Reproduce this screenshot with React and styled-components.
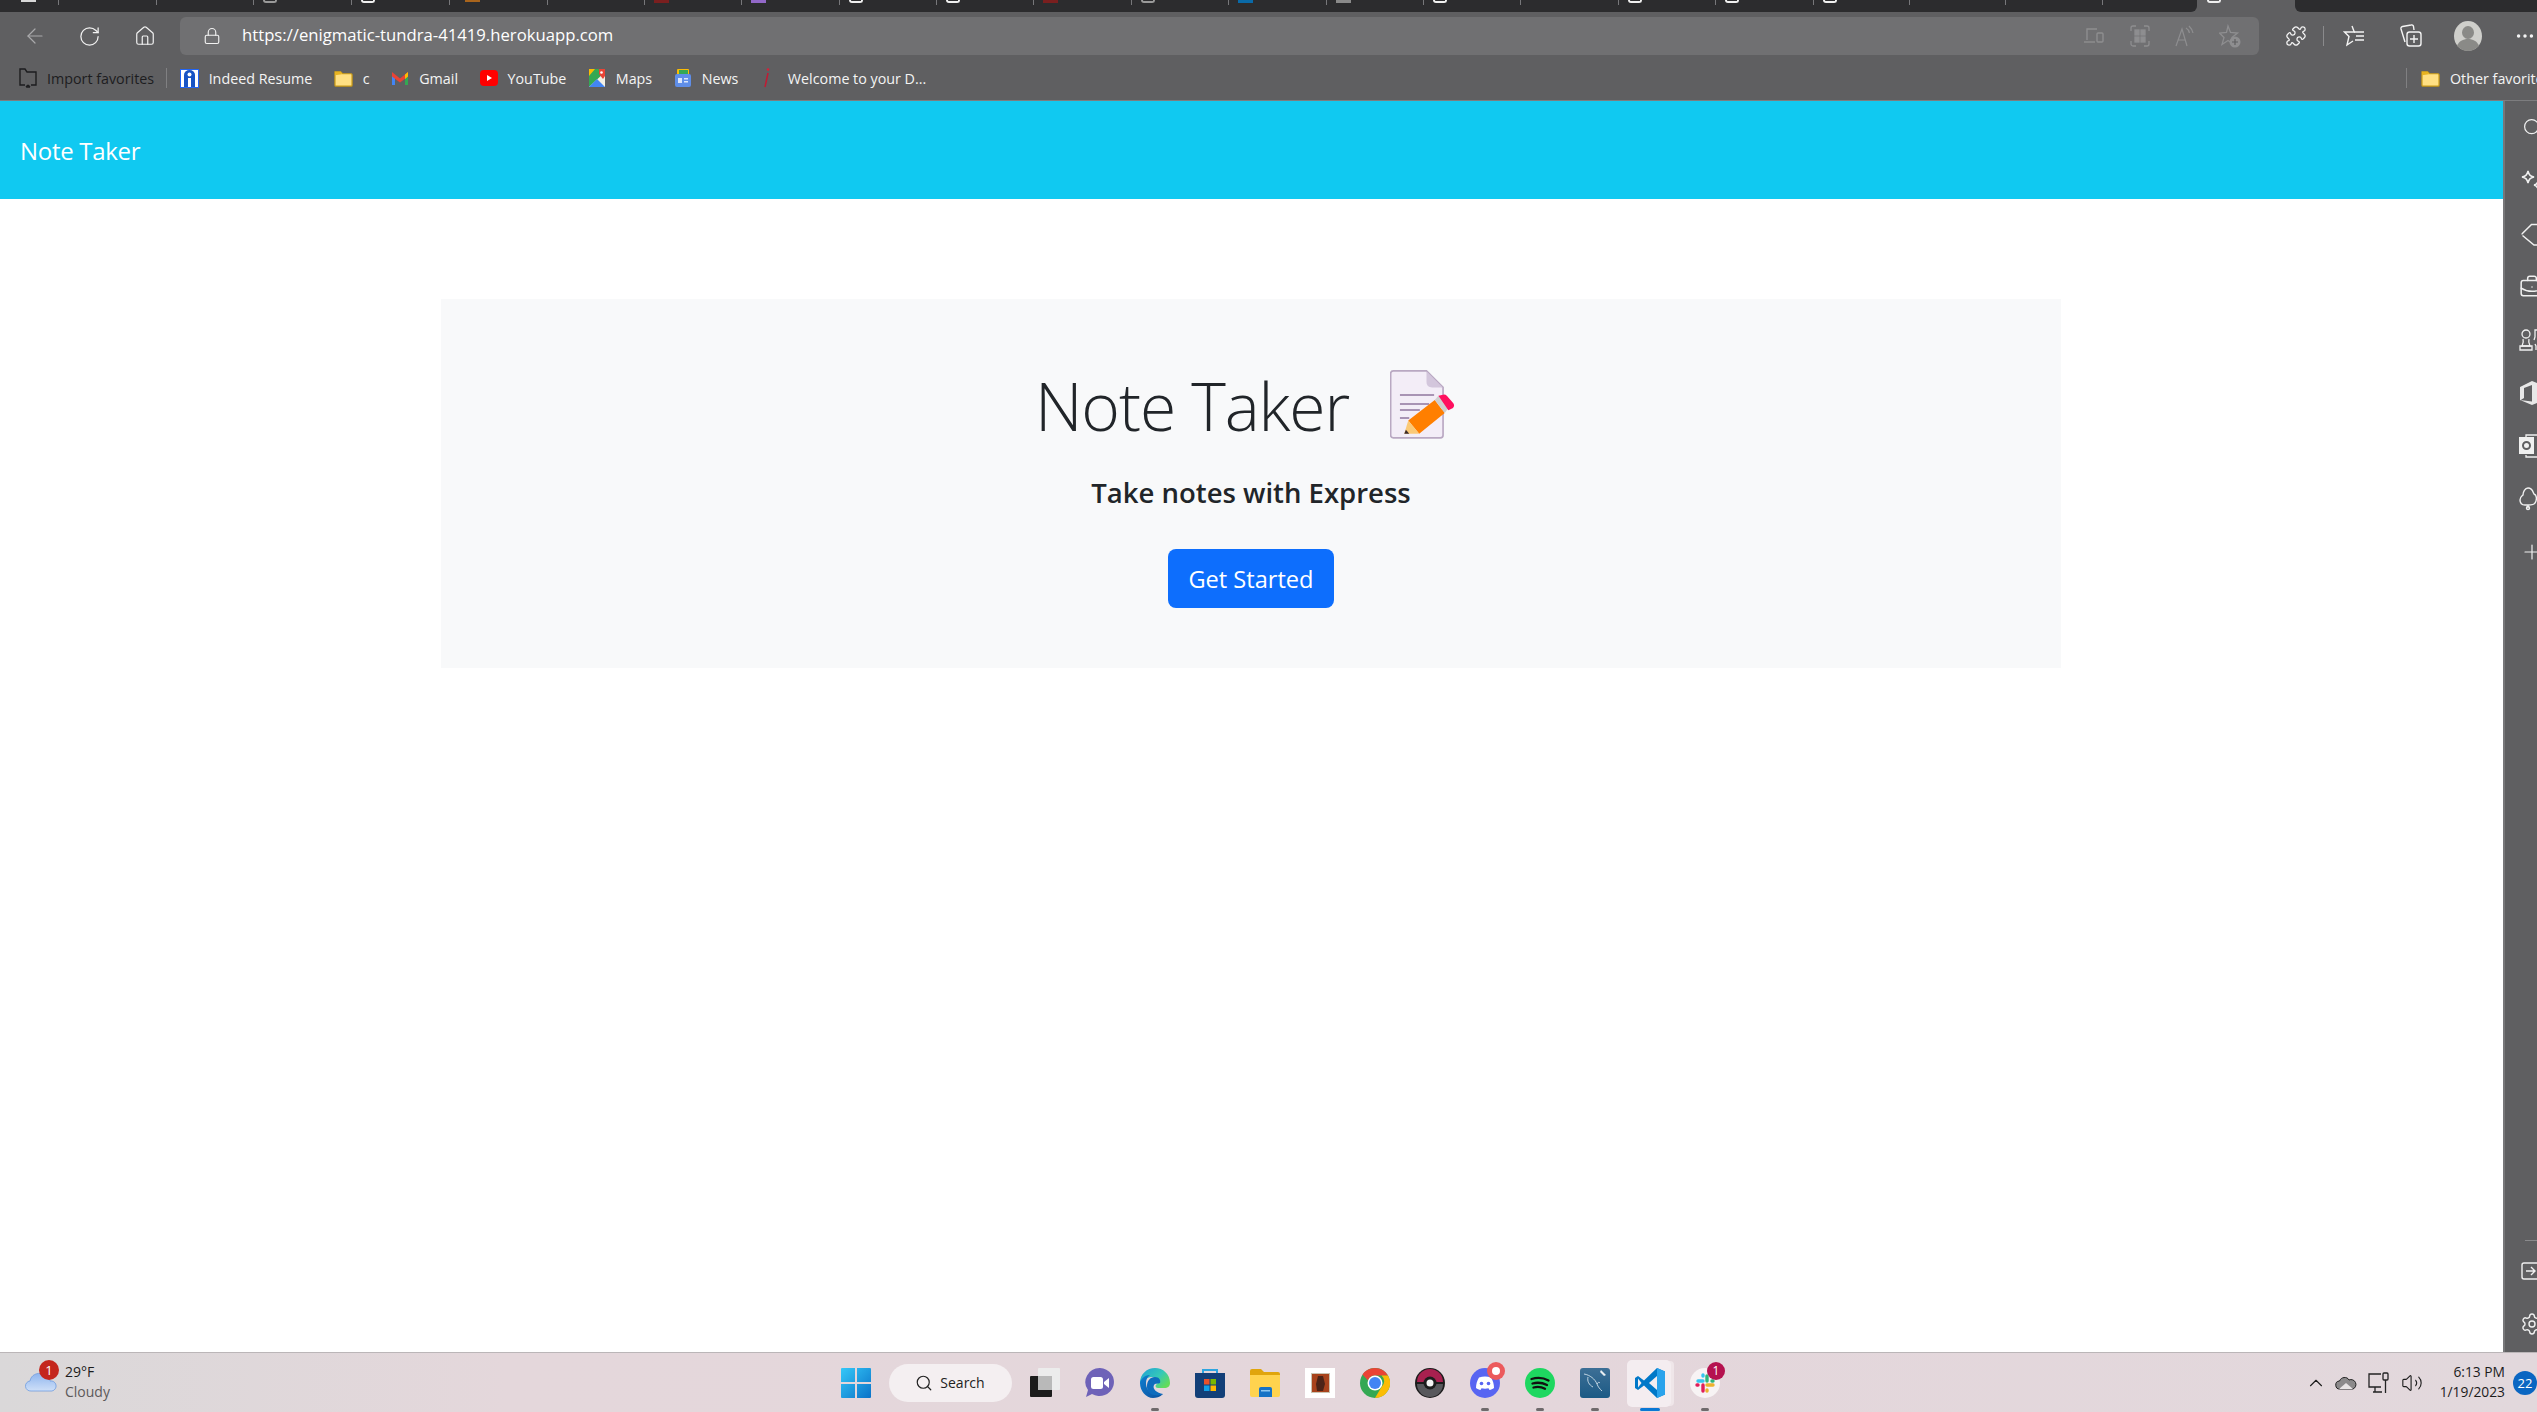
import React from "react";
import styled, { createGlobalStyle } from "styled-components";
import {
  ArrowLeft, RotateCw, Home, Lock, Puzzle, MoreHorizontal, Search, BriefcaseBusiness,
  Plus, Settings, ChevronUp, Volume2,
} from "lucide-react";

const Global = createGlobalStyle`
  html, body { margin: 0; padding: 0; height: 100%; overflow: hidden; background: #fff; }
  #root { height: 100%; }
  * { box-sizing: border-box; }
`;

const UI = `"Open Sans", "Noto Sans", sans-serif`;

const Shell = styled.div`
  width: 2537px; height: 1412px; display: flex; flex-direction: column; overflow: hidden;
  background: #5f5f61; font-family: ${UI};
`;

/* tab strip */
const TabStrip = styled.div`display: flex; height: 12px; flex: none; background: #5f5f61;`;
const TabGroup = styled.div`
  display: flex; flex: none; height: 12px; background: #2c2c2e; overflow: hidden;
  width: ${p => p.$w}px; border-radius: ${p => p.$r};
`;
const ActiveTab = styled.div`width: 98px; flex: none; height: 12px; padding-left: 10px;`;
const Tab = styled.div`
  flex: none; width: ${p => p.$w}px; height: 5px; border-right: 1px solid #77777a;
  padding-left: ${p => p.$p}px;
`;
const TabStub = styled.div`
  width: 15px; height: ${p => p.$h}px; background: ${p => p.$c};
  ${p => p.$outline ? `background: transparent; border: 2px solid ${p.$c}; border-top: 0; border-radius: 0 0 3px 3px; width: 14px; height: 3px;` : ""}
`;

/* toolbar */
const Toolbar = styled.div`display: flex; align-items: center; height: 50px; flex: none; padding-left: 7px; padding-bottom: 7px; padding-top: 5px;`;
const NavBtn = styled.div`width: 55px; flex: none; display: flex; justify-content: center; align-items: center; color: ${p => p.$c || "#f2f2f2"};`;
const AddressBar = styled.div`
  margin-left: 8px; width: 2079px; flex: none; height: 38px; background: #707072; border-radius: 6px;
  display: flex; align-items: center; padding-right: 6px;
`;
const LockBox = styled.div`width: 62px; flex: none; display: flex; justify-content: flex-end; padding-right: 21px; color: #f2f2f2;`;
const Url = styled.div`color: #fff; font-size: 16.7px; flex: 1; line-height: 36px; padding-bottom: 2px;`;
const BarBtn = styled.div`width: 45.3px; flex: none; display: flex; justify-content: center; color: #8e8e90;`;
const ExtBtn = styled.div`margin-left: 14px; width: 46px; flex: none; display: flex; justify-content: center; color: #f4f4f4;`;
const ToolSep = styled.div`width: 1px; height: 20px; background: #8a8a8c; margin: 0 1px 0 4px; flex: none;`;
const ToolBtn = styled.div`width: 57px; flex: none; display: flex; justify-content: center; color: #f4f4f4;`;

/* bookmarks */
const Bookmarks = styled.div`
  display: flex; align-items: center; height: 38px; flex: none; padding: 0 0 6px 18px;
  overflow: hidden; font-size: 14.3px; color: #f4f4f4;
`;
const Bookmark = styled.div`display: flex; align-items: center; gap: ${p => p.$gap || 10}px; margin-right: 21.5px; flex: none; white-space: nowrap; color: ${p => p.$dark ? "#1d1d1f" : "#f4f4f4"};`;
const BookSep = styled.div`width: 1px; height: 20px; background: #808082; flex: none; margin-right: ${p => p.$mr ?? 13}px; margin-left: ${p => p.$ml || 0}px;`;
const OtherFav = styled.div`
  display: flex; align-items: center; gap: 10px; margin-left: auto; width: 131px; flex: none; white-space: nowrap;
  & > * { flex: none; }
`;
const FavLabel = styled.span`margin-left: 0;`;

/* middle */
const Middle = styled.div`flex: 1; display: flex; min-height: 0; border-top: 1px solid #7d7d7f;`;
const Page = styled.main`flex: 1; background: #fff; display: flex; flex-direction: column; min-width: 0;`;
const Navbar = styled.nav`
  height: 98px; flex: none; background: #10c9f1; display: flex; align-items: center; padding-left: 20px;
  color: #fff; font-size: 24px; letter-spacing: -0.3px;
`;
const Hero = styled.section`
  width: 1620px; height: 369px; margin: 100px 0 0 441px; background: #f8f9fa;
  display: flex; flex-direction: column; align-items: center; padding-top: 64px;
`;
const TitleRow = styled.div`display: flex; align-items: center; gap: 41px; height: 84px; padding-right: 12px;`;
const Title = styled.h1`margin: 0; font-weight: 300; font-size: 66px; letter-spacing: -1.1px; line-height: 84px; color: #212529;`;
const Lead = styled.p`margin: 26px 0 0; font-weight: 600; font-size: 27.5px; line-height: 40px; color: #212529;`;
const Cta = styled.button`
  margin-top: 36px; width: 166px; height: 59px; border: 0; border-radius: 8px; background: #0d6efd;
  color: #fff; font-family: ${UI}; font-size: 23.6px; padding: 0;
`;

/* side rail */
const Rail = styled.aside`
  width: 34px; flex: none; background: #5f5f61; border-left: 2px solid #777779; overflow: hidden;
  display: flex; flex-direction: column;
`;
const RailInner = styled.div`width: 54px; height: 100%; display: flex; flex-direction: column; align-items: center; color: #f0f0f0; padding-bottom: 2px;`;
const RailBtn = styled.div`height: 53px; flex: none; display: flex; align-items: center; justify-content: center;`;
const RailSpacer = styled.div`flex: 1;`;
const RailRule = styled.div`width: 34px; height: 1px; background: #8a8a8c; margin-left: 20px; margin-bottom: 3px;`;

/* taskbar */
const Taskbar = styled.footer`
  height: 60px; flex: none; display: flex; align-items: center;
  background: linear-gradient(90deg, #dad8d9 0%, #e4d7db 20%, #e4d6db 60%, #e2d8dc 100%);
  border-top: 1px solid #bbb6b8; position: relative;
`;
const Weather = styled.div`width: 828px; flex: none; display: flex; align-items: center; padding-left: 25px; gap: 8px; position: relative;`;
const WeatherBadge = styled.div`
  position: absolute; left: 39px; top: -4px; width: 20px; height: 20px; border-radius: 50%; background: #c4261d;
  color: #fff; font-size: 13px; display: flex; align-items: center; justify-content: center;
`;
const WeatherCloud = styled.div`display: flex; margin-bottom: 4px;`;
const WeatherText = styled.div`display: flex; flex-direction: column; line-height: 20px; font-size: 14px; color: #1c1c1c; margin-top: -2px;`;
const WeatherSub = styled.span`color: #5c5a5b;`;
const Apps = styled.div`display: flex; align-items: center;`;
const Slot = styled.div`
  width: 55px; height: 48px; flex: none; display: flex; align-items: center; justify-content: center; position: relative;
  ${p => p.$active ? `
    &::before { content: ""; position: absolute; left: 5px; top: 1px; width: 44px; height: 47px; border-radius: 5px; background: #f4edf0; box-shadow: 4px 0 0 -1px #efe6e9; }
    & > svg { position: relative; }
  ` : ""}
`;
const Running = styled.div`
  position: absolute; bottom: -4px; left: 50%; transform: translateX(-50%);
  width: ${p => p.$active ? 20 : 8}px; height: 3px; border-radius: 2px; background: ${p => p.$active ? "#0a78d4" : "#6f6a6c"};
`;
const SearchPill = styled.div`
  width: 123px; height: 38px; border-radius: 19px; background: #f4eff1; margin: 0 5.5px; flex: none;
  display: flex; align-items: center; justify-content: center; gap: 7px; font-size: 14px; color: #222;
`;
const AppBadge = styled.div`
  position: absolute; width: 18px; height: 18px; border-radius: 50%; top: 3px; right: 7px; background: ${p => p.$c};
  color: #fff; font-size: 12px; display: flex; align-items: center; justify-content: center;
  ${p => p.$dot ? `&::after { content: ""; width: 8px; height: 8px; border-radius: 50%; background: #fff; }` : ""}
`;
const Tray = styled.div`margin-left: auto; display: flex; align-items: center; color: #1c1c1c;`;
const TrayIcon = styled.div`display: flex; width: ${p => p.$w}px; justify-content: center; flex: none;`;
const Clock = styled.div`
  display: flex; flex-direction: column; align-items: flex-end; font-size: 13.8px; line-height: 20px; color: #1c1c1c;
  width: 78px; flex: none; margin-top: -2px;
`;
const NotifCount = styled.div`
  width: 24px; height: 24px; border-radius: 50%; background: #0a66c2; color: #fff; font-size: 13px; flex: none;
  display: flex; align-items: center; justify-content: center; margin: 0 0 0 8px;
`;

/* drawings */
const Folder = ({ s = 19 }) => (
  <svg width={s} height={s} viewBox="0 0 20 20">
    <path d="M1 3h6l2 2h9a1 1 0 0 1 1 1v11a1 1 0 0 1-1 1H2a1 1 0 0 1-1-1z" fill="#ffe083" stroke="#c99a16" strokeWidth="1.3" />
    <path d="M1 3h6l1.5 2.5L1 6.5z" fill="#e8b321" />
  </svg>
);
const ImportIcon = () => (
  <svg width="20" height="22" viewBox="0 0 20 22" fill="none" stroke="#1d1d1f" strokeWidth="1.4">
    <path d="M7 18H2V2h5l2 3h9v13h-5" />
    <path d="M8 20H12M8 20l2-2M12 20l-2-2" />
  </svg>
);
const IndeedIco = () => (
  <svg width="19" height="19" viewBox="0 0 19 19">
    <rect x="0.5" y="0.5" width="18" height="18" fill="#fff" stroke="#2164f3" />
    <path d="M4 18V6a5.500 5 0 0 1 11 0v12z" fill="#1753c4" />
    <circle cx="9.500" cy="5.500" r="2" fill="#fff" /><rect x="8" y="9" width="3" height="9" fill="#fff" />
  </svg>
);
const GmailIco = () => (
  <svg width="18" height="18" viewBox="0 0 18 18">
    <path d="M1 4v12h3V8z" fill="#4285f4" /><path d="M17 4v12h-3V8z" fill="#34a853" />
    <path d="M1 3l8 6.5L17 3v4.500L9 13.500 1 7.500z" fill="#ea4335" /><path d="M14 5.500L17 3v4.500L14 10z" fill="#fbbc04" />
  </svg>
);
const YoutubeIco = () => (
  <svg width="18" height="18" viewBox="0 0 18 18">
    <rect x="0" y="1" width="18" height="16" rx="4" fill="#f00" /><path d="M7 6l5 3-5 3z" fill="#fff" />
  </svg>
);
const MapsIco = () => (
  <svg width="18" height="20" viewBox="0 0 18 20">
    <rect x="1" y="1" width="16" height="18" rx="1.500" fill="#34a853" />
    <path d="M1 19L17 4v15z" fill="#f4f0e4" /><path d="M1 19l8-8 8 8z" fill="#4285f4" /><path d="M1 1h6L1 8z" fill="#fbbc04" />
    <path d="M11 1h6v7l-2 3-4-5z" fill="#ea4335" /><circle cx="13.500" cy="4.500" r="1.300" fill="#fff" />
  </svg>
);
const NewsIco = () => (
  <svg width="18" height="20" viewBox="0 0 18 20">
    <rect x="3" y="1" width="12" height="8" rx="1" fill="#fbbc04" /><rect x="5" y="2" width="9" height="6" fill="#34a853" />
    <rect x="1" y="6" width="16" height="13" rx="2" fill="#5f8ee8" />
    <rect x="4" y="10" width="4" height="5" fill="#dce6fb" /><rect x="10" y="10" width="4" height="1.500" fill="#dce6fb" /><rect x="10" y="13" width="4" height="1.500" fill="#dce6fb" />
  </svg>
);
const RedI = () => (
  <svg width="13" height="22" viewBox="0 0 13 22">
    <circle cx="8" cy="2.500" r="1.300" fill="#d5203a" /><path d="M8 6L5 20" stroke="#c21a33" strokeWidth="1.500" fill="none" />
  </svg>
);
const DevicesIco = () => (
  <svg width="20" height="18" viewBox="0 0 20 18" fill="none" stroke="currentColor" strokeWidth="1.400">
    <path d="M13 2H3v11" /><path d="M0 15h11" /><rect x="13" y="6" width="6" height="9" rx="1" />
  </svg>
);
const AppsGridIco = () => (
  <svg width="20" height="22" viewBox="0 0 20 22" fill="none" stroke="currentColor" strokeWidth="1.300">
    <path d="M1 6V3a2 2 0 0 1 2-2h3M14 1h3a2 2 0 0 1 2 2v3M19 16v3a2 2 0 0 1-2 2h-3M6 21H3a2 2 0 0 1-2-2v-3" />
    <rect x="5" y="5" width="4" height="5" fill="currentColor" /><rect x="11" y="5" width="4" height="5" fill="currentColor" />
    <rect x="5" y="12" width="4" height="5" fill="currentColor" /><rect x="11" y="12" width="4" height="5" fill="currentColor" />
  </svg>
);
const ReadIco = () => (
  <svg width="20" height="22" viewBox="0 0 20 22" fill="none" stroke="currentColor" strokeWidth="1.200">
    <path d="M1 21L7 4l5 17M3.500 15h7" /><path d="M11 3c2 1 3 3 3.500 5M14 1c2 2 3.500 4 4 7" />
  </svg>
);
const StarAddIco = () => (
  <svg width="22" height="24" viewBox="0 0 22 24">
    <path d="M9 2l2.500 6.500 7 .5-5.500 4.500 2 7-6-4-6 4 2-7L0.500 9l7-.5z" fill="none" stroke="currentColor" strokeWidth="1.300" />
    <circle cx="16" cy="18" r="5.500" fill="#8e8e90" /><path d="M16 15v6M13 18h6" stroke="#5f5f61" strokeWidth="1.200" />
  </svg>
);
const FavListIco = () => (
  <svg width="22" height="24" viewBox="0 0 22 24" fill="none" stroke="currentColor" strokeWidth="1.400">
    <path d="M9 2l2.300 6H1.500L6 12.500 4 21l6-4" /><path d="M11 8h3M13 12h8M12 16h9M14 8h7" />
  </svg>
);
const CollectionsIco = () => (
  <svg width="22" height="24" viewBox="0 0 22 24" fill="none" stroke="currentColor" strokeWidth="1.400">
    <path d="M5 18L1 5a2 2 0 0 1 1.500-2.500L11 1a2 2 0 0 1 2.500 1.500L14 6" />
    <rect x="7" y="8" width="14" height="14" rx="2.500" /><path d="M14 11v8M10 15h8" />
  </svg>
);
const Avatar = () => (
  <svg width="28" height="30" viewBox="0 0 28 30">
    <ellipse cx="14" cy="15" rx="14" ry="15" fill="#cfcfcb" />
    <ellipse cx="14" cy="11.500" rx="6" ry="6.500" fill="#8a8a87" />
    <path d="M3 25c2-5 6-7 11-7s9 2 11 7c-3 3-7 5-11 5s-8-2-11-5z" fill="#8a8a87" />
  </svg>
);
const SparkIco = () => (
  <svg width="24" height="24" viewBox="0 0 24 24" fill="none" stroke="currentColor" strokeWidth="1.500">
    <path d="M8 2c1 4 2 5 6 6-4 1-5 2-6 6-1-4-2-5-6-6 4-1 5-2 6-6z" />
    <path d="M18 12c.7 3 1.500 3.700 4 4-2.500.700-3.300 1.300-4 4-.7-2.700-1.500-3.300-4-4 2.500-.300 3.300-1 4-4z" />
  </svg>
);
const TagIco = () => (
  <svg width="24" height="24" viewBox="0 0 24 24" fill="none" stroke="currentColor" strokeWidth="1.500">
    <path d="M2 12.500a1.500 1.500 0 0 1 .4-1L11.500 2.500H24M24 23h-10l-11.500-9.500" />
    <circle cx="19" cy="7" r="1.200" fill="currentColor" />
  </svg>
);
const BoxArrowIco = () => (
  <svg width="24" height="20" viewBox="0 0 24 20" fill="none" stroke="currentColor" strokeWidth="1.400">
    <rect x="2" y="2" width="30" height="16" rx="2" /><path d="M6 10h9M11 6l4 4-4 4" /><path d="M18 2v16" />
  </svg>
);
const ChessIco = () => (
  <svg width="26" height="22" viewBox="0 0 26 22" fill="none" stroke="currentColor" strokeWidth="1.300">
    <circle cx="7" cy="5" r="4" /><path d="M4 10c1 3 0 5-1 7h8c-1-2-2-4-1-7" /><path d="M1 21v-4h12v4z" />
    <path d="M15 11l1-3V1h7" /><path d="M17 21v-4l-1-2" />
  </svg>
);
const OfficeIco = () => (
  <svg width="26" height="26" viewBox="0 0 26 26">
    <path d="M1 7l12-6 10 4v16l-10 4-12-5 12 1.500V5l-8 3v10l-4 2.500z" fill="#e8e8e8" />
  </svg>
);
const OutlookIco = () => (
  <svg width="28" height="24" viewBox="0 0 28 24" fill="none" stroke="currentColor" strokeWidth="1.300">
    <path d="M8 3V1h18v22H8v-2" /><rect x="1" y="3" width="15" height="17" fill="currentColor" stroke="none" />
    <circle cx="8.500" cy="11.500" r="3.500" stroke="#5f5f61" strokeWidth="2" />
  </svg>
);
const TreeIco = () => (
  <svg width="26" height="24" viewBox="0 0 26 24" fill="none" stroke="currentColor" strokeWidth="1.400">
    <path d="M9 1c5 0 5 5 6 6 3 1 3 6 1 9-1 2-4 2-7 2H6c-3 0-5-2-5-5s2-4 3-5c0-3 2-7 5-7z" /><path d="M9 18v3" /><circle cx="9" cy="21" r="1.500" />
  </svg>
);
const DocPencil = () => (
  <svg width="65" height="70" viewBox="0 0 196 210">
    <path d="M10 2H110L160 52V196Q160 204 152 204H10Q2 204 2 196V10Q2 2 10 2Z" fill="#f3edf7" stroke="#b9a8c2" strokeWidth="5" />
    <path d="M110 3V36Q110 52 127 52H159Z" fill="#d3c6dc" />
    <path d="M30 75H133M30 102H118M30 120H90M30 144H58" stroke="#a893b4" strokeWidth="6" />
    <path d="M55 152L135 90L165 129L88 192Z" fill="#ff7f00" />
    <path d="M55 152L88 192L43 192Z" fill="#fbc977" />
    <path d="M48 180L58 192H43Z" fill="#3a2a2a" />
    <path d="M135 90L146 77L176 115L165 129Z" fill="#cfcfcf" />
    <path d="M146 77L160 74Q166 72 172 78L191 100Q196 108 190 114L176 121Z" fill="#ff0f5f" />
  </svg>
);
const CloudIco = () => (
  <svg width="32" height="24" viewBox="0 0 32 24">
    <defs><linearGradient id="wc" x1="0" y1="0" x2="0" y2="1"><stop offset="0" stopColor="#8fb5ee" /><stop offset="1" stopColor="#cfe0f8" /></linearGradient></defs>
    <path d="M6 22a5 5 0 0 1-1-10c1-6 7-9 13-7 4 1 7 5 7 7a5 5 0 0 1 2 10z" fill="url(#wc)" stroke="#6f9ce0" strokeWidth="0.800" />
  </svg>
);
const StartIco = () => (
  <svg width="30" height="30" viewBox="0 0 30 30">
    <defs><linearGradient id="st" x1="0" y1="0" x2="1" y2="1"><stop offset="0" stopColor="#35c8f8" /><stop offset="1" stopColor="#0a72c8" /></linearGradient></defs>
    <path d="M0 1a1 1 0 0 1 1-1h13v14H0zM16 0h13a1 1 0 0 1 1 1v13H16zM0 16h14v14H1a1 1 0 0 1-1-1zM16 16h14v13a1 1 0 0 1-1 1H16z" fill="url(#st)" />
  </svg>
);
const TaskViewIco = () => (
  <svg width="30" height="30" viewBox="0 0 30 30">
    <rect x="8" y="0" width="22" height="22" rx="1" fill="#ececec" />
    <rect x="0" y="8" width="22" height="21" rx="1" fill="#1c1c1c" />
    <rect x="8" y="8" width="14" height="14" fill="#b9b9b9" />
  </svg>
);
const TeamsIco = () => (
  <svg width="30" height="30" viewBox="0 0 30 30">
    <path d="M15 0a14.500 14 0 1 1-8 26l-6 3 2-7A14.500 14 0 0 1 15 0z" fill="#6e62b8" />
    <rect x="6" y="9" width="12" height="12" rx="2.500" fill="#fff" /><path d="M19 14l5-4v10l-5-4z" fill="#fff" />
  </svg>
);
const EdgeIco = () => (
  <svg width="30" height="30" viewBox="0 0 30 30">
    <defs>
      <linearGradient id="e1" x1="0" y1="0" x2="1" y2="0.700"><stop offset="0" stopColor="#1f9fd8" /><stop offset="0.600" stopColor="#35c8b8" /><stop offset="1" stopColor="#62dc5a" /></linearGradient>
      <linearGradient id="e2" x1="0" y1="0" x2="1" y2="1"><stop offset="0" stopColor="#0f7fd0" /><stop offset="1" stopColor="#0b4f9e" /></linearGradient>
    </defs>
    <path d="M0 15C0 6 7 0 15 0s15 6 15 15c0 3-2 5-6 5h-6c-3 0-3-3-1-4 2-2 0-7-5-7-6 0-9 5-9 9z" fill="url(#e1)" />
    <path d="M0 15c0-3 4-8 10-8-4 3-5 8-3 13 2 5 9 7 16 6-3 3-7 4-10 4C6 30 0 23 0 15z" fill="url(#e2)" />
    <path d="M7 18c0-5 3-9 8-9 4 0 6 3 5 6-2 1-5 0-6 2-2 4 3 8 9 9-6 3-13 1-15-3-1-2-1-3-1-5z" fill="#0d6bbd" />
  </svg>
);
const StoreIco = () => (
  <svg width="30" height="30" viewBox="0 0 30 30">
    <path d="M8 6V2h14v4" fill="none" stroke="#2ea5e0" strokeWidth="2" />
    <path d="M0 5h30v22a3 3 0 0 1-3 3H3a3 3 0 0 1-3-3z" fill="#123f78" />
    <rect x="9" y="11" width="5.500" height="5.500" fill="#e8512a" /><rect x="15.500" y="11" width="5.500" height="5.500" fill="#7ab800" />
    <rect x="9" y="17.500" width="5.500" height="5.500" fill="#10a0e8" /><rect x="15.500" y="17.500" width="5.500" height="5.500" fill="#ffb900" />
  </svg>
);
const ExplorerIco = () => (
  <svg width="30" height="28" viewBox="0 0 30 28">
    <path d="M0 2a2 2 0 0 1 2-2h9l3 3h14a2 2 0 0 1 2 2v4H0z" fill="#e0a50c" />
    <path d="M0 6h30v20a2 2 0 0 1-2 2H2a2 2 0 0 1-2-2z" fill="#ffd34e" />
    <path d="M9 20a2 2 0 0 1 2-2h9a2 2 0 0 1 2 2v8H9z" fill="#1572c6" /><rect x="11" y="21" width="9" height="1.500" fill="#8cc6f0" />
  </svg>
);
const GameIco = () => (
  <svg width="30" height="30" viewBox="0 0 30 30">
    <rect width="30" height="30" fill="#fff" /><rect x="6" y="5" width="19" height="20" fill="#c9c3b2" />
    <rect x="7" y="6" width="17" height="18" fill="#a8431c" /><path d="M13 8h5l2 8-2 7h-6l-1-7z" fill="#4c2417" />
  </svg>
);
const ChromeIco = () => (
  <svg width="30" height="30" viewBox="0 0 30 30">
    <circle cx="15" cy="15" r="15" fill="#34a853" />
    <path d="M15 0a15 15 0 0 1 13 7.500H15a7.500 7.500 0 0 0-7 5L2.500 6.500A15 15 0 0 1 15 0z" fill="#ea4335" />
    <path d="M28 7.500A15 15 0 0 1 15 30l6.500-11a7.500 7.500 0 0 0 0-11.500z" fill="#fbbc04" />
    <circle cx="15" cy="15" r="7.500" fill="#fff" /><circle cx="15" cy="15" r="6" fill="#4285f4" />
  </svg>
);
const PokeIco = () => (
  <svg width="30" height="30" viewBox="0 0 30 30">
    <circle cx="15" cy="15" r="15" fill="#1c1c1c" /><path d="M2 14a13 13 0 0 1 26 0z" fill="#a8204f" />
    <path d="M2 16a13 13 0 0 0 26 0z" fill="#58585c" /><circle cx="15" cy="15" r="6.500" fill="#1c1c1c" /><circle cx="15" cy="15" r="3.500" fill="#f4f4f4" />
  </svg>
);
const DiscordIco = () => (
  <svg width="30" height="30" viewBox="0 0 30 30">
    <circle cx="15" cy="15" r="15" fill="#5865f2" />
    <path d="M9 9.500c4-1.500 8-1.500 12 0 2 3 3 7 3 10.500-1.500 1.200-3 1.800-4.500 2l-1-1.700c-2.300.6-4.700.6-7 0l-1 1.700c-1.500-.2-3-.8-4.500-2C6 16.500 7 12.500 9 9.500z" fill="#fff" />
    <circle cx="11.500" cy="15.500" r="1.800" fill="#5865f2" /><circle cx="18.500" cy="15.500" r="1.800" fill="#5865f2" />
  </svg>
);
const SpotifyIco = () => (
  <svg width="30" height="30" viewBox="0 0 30 30">
    <circle cx="15" cy="15" r="15" fill="#1ed760" />
    <path d="M6.500 11c6-1.700 12-1.200 17 1.500M7.500 15.500c5-1.300 10-.8 14.500 1.500M8.500 19.500c4-1 8-.6 11.500 1.200" stroke="#111" strokeWidth="2.300" fill="none" strokeLinecap="round" />
  </svg>
);
const MysqlIco = () => (
  <svg width="30" height="30" viewBox="0 0 30 30">
    <defs><linearGradient id="my" x1="0" y1="0" x2="0" y2="1"><stop offset="0" stopColor="#3d6f96" /><stop offset="1" stopColor="#1c5a85" /></linearGradient></defs>
    <rect width="30" height="30" rx="3" fill="url(#my)" />
    <path d="M4 6c6 1 11 5 13 10 1 3 3 5 5 7M8 9c-1 4 1 8 5 10M17 16c1-2 2-2 3-1" stroke="#cfe0ea" strokeWidth="0.900" fill="none" />
    <path d="M21 2l5 5-2 1-4-4z" fill="#e8eef2" />
  </svg>
);
const VsCodeIco = () => (
  <svg width="30" height="30" viewBox="0 0 30 30">
    <path d="M22 0l8 3.500v23L22 30 9 17.500 3 22 0 20v-10l3-2 6 4.500z" fill="#0078c8" />
    <path d="M22 0l8 3.500v23L22 30z" fill="#2aa3ec" />
    <path d="M22 8l-8 7 8 7z" fill="#f4edf0" />
    <path d="M3 10.500l3.500 4.500L3 19.500z" fill="#f4edf0" />
  </svg>
);
const SlackIco = () => (
  <svg width="30" height="30" viewBox="0 0 30 30">
    <circle cx="15" cy="15" r="15" fill="#f7f3f4" />
    <g strokeWidth="3.400" strokeLinecap="round" fill="none">
      <path d="M8 13h5M13 7v1" stroke="#36c5f0" />
      <path d="M17 8v5M23 13h-1" stroke="#2eb67d" />
      <path d="M17 17h6M17 23v-1" stroke="#ecb22e" />
      <path d="M13 17v6M7 17h1" stroke="#e01e5a" />
    </g>
  </svg>
);
const CloudTray = () => (
  <svg width="22" height="14" viewBox="0 0 22 14">
    <path d="M5 13a4 4 0 0 1-.500-8C6 1 12 0 14 4a4.500 4.500 0 0 1 4 9z" fill="#8c8a8b" stroke="#222" strokeWidth="1" />
    <path d="M4 13l7-6 7 6z" fill="#e8e4e5" />
  </svg>
);
const NetIco = () => (
  <svg width="22" height="22" viewBox="0 0 22 22" fill="none" stroke="#222" strokeWidth="1.300">
    <path d="M13 2H1v13h12M5 20h9M7 15v5" /><rect x="15" y="1" width="5" height="7" rx="1" /><path d="M17.500 8v13" />
  </svg>
);

const tabs = [
  { w: 59, p: 21, c: "#d8d8d8", h: 2 }, { w: 98 }, { w: 97 },
  { w: 98, p: 9, c: "#9a9a9a", o: 1 }, { w: 98, p: 9, c: "#f0f0f0", o: 1 }, { w: 98, p: 15, c: "#a8641c", h: 2 },
  { w: 97 }, { w: 97, p: 9, c: "#7a1f1f", h: 3 }, { w: 98, p: 9, c: "#9268c8", h: 3 },
  { w: 97, p: 9, c: "#f0f0f0", o: 1 }, { w: 97, p: 9, c: "#f0f0f0", o: 1 }, { w: 98, p: 9, c: "#7a1f1f", h: 3 },
  { w: 97, p: 9, c: "#9a9a9a", o: 1 }, { w: 98, p: 9, c: "#0a6aa8", h: 3 }, { w: 97, p: 9, c: "#8a8a8a", h: 3 },
  { w: 97, p: 9, c: "#f0f0f0", o: 1 }, { w: 98 }, { w: 97, p: 9, c: "#f0f0f0", o: 1 },
  { w: 98, p: 9, c: "#f0f0f0", o: 1 }, { w: 96, p: 9, c: "#f0f0f0", o: 1 }, { w: 96 }, { w: 97 },
];

const apps = [
  [<TaskViewIco key="a" />], [<TeamsIco key="a" />], [<EdgeIco key="a" />, "run"], [<StoreIco key="a" />],
  [<ExplorerIco key="a" />], [<GameIco key="a" />], [<ChromeIco key="a" />], [<PokeIco key="a" />],
  [<DiscordIco key="a" />, "run", "dot"], [<SpotifyIco key="a" />, "run"], [<MysqlIco key="a" />, "run"],
  [<VsCodeIco key="a" />, "active"], [<SlackIco key="a" />, "run", "one"],
];

export default function App() {
  return (
    <Shell>
      <Global />
      <TabStrip>
        <TabGroup $w={2197} $r="0 0 6px 0">
          {tabs.map((t, i) => (
            <Tab key={i} $w={t.w} $p={t.p || 0}>
              {t.c && <TabStub $c={t.c} $h={t.h || 3} $outline={t.o} />}
            </Tab>
          ))}
        </TabGroup>
        <ActiveTab><TabStub $c="#f0f0f0" $outline /></ActiveTab>
        <TabGroup $w={242} $r="0 0 0 6px" />
      </TabStrip>

      <Toolbar>
        <NavBtn $c="#a9a9ab"><ArrowLeft size={24} strokeWidth={1.2} /></NavBtn>
        <NavBtn><RotateCw size={23} strokeWidth={1.3} /></NavBtn>
        <NavBtn><Home size={22} strokeWidth={1.3} /></NavBtn>
        <AddressBar>
          <LockBox><Lock size={18} strokeWidth={1.5} /></LockBox>
          <Url>https://enigmatic-tundra-41419.herokuapp.com</Url>
          <BarBtn><DevicesIco /></BarBtn>
          <BarBtn><AppsGridIco /></BarBtn>
          <BarBtn><ReadIco /></BarBtn>
          <BarBtn><StarAddIco /></BarBtn>
        </AddressBar>
        <ExtBtn><Puzzle size={22} strokeWidth={1.4} /></ExtBtn>
        <ToolSep />
        <ToolBtn><FavListIco /></ToolBtn>
        <ToolBtn><CollectionsIco /></ToolBtn>
        <ToolBtn><Avatar /></ToolBtn>
        <ToolBtn><MoreHorizontal size={22} strokeWidth={1.8} /></ToolBtn>
      </Toolbar>

      <Bookmarks>
        <Bookmark $dark $gap={9}><ImportIcon />Import favorites</Bookmark>
        <BookSep $ml={-10} />
        <Bookmark><IndeedIco />Indeed Resume</Bookmark>
        <Bookmark><Folder />c</Bookmark>
        <Bookmark><GmailIco />Gmail</Bookmark>
        <Bookmark><YoutubeIco />YouTube</Bookmark>
        <Bookmark><MapsIco />Maps</Bookmark>
        <Bookmark><NewsIco />News</Bookmark>
        <Bookmark $gap={15}><RedI />Welcome to your D...</Bookmark>
        <OtherFav><BookSep $mr={4} /><Folder /><FavLabel>Other favorites</FavLabel></OtherFav>
      </Bookmarks>

      <Middle>
        <Page>
          <Navbar>Note Taker</Navbar>
          <Hero>
            <TitleRow>
              <Title>Note Taker</Title>
              <DocPencil />
            </TitleRow>
            <Lead>Take notes with Express</Lead>
            <Cta>Get Started</Cta>
          </Hero>
        </Page>
        <Rail>
          <RailInner>
            <RailBtn><Search size={21} strokeWidth={1.4} /></RailBtn>
            <RailBtn><SparkIco /></RailBtn>
            <RailBtn><TagIco /></RailBtn>
            <RailBtn><BriefcaseBusiness size={26} strokeWidth={1.4} /></RailBtn>
            <RailBtn><ChessIco /></RailBtn>
            <RailBtn><OfficeIco /></RailBtn>
            <RailBtn><OutlookIco /></RailBtn>
            <RailBtn><TreeIco /></RailBtn>
            <RailBtn><Plus size={24} strokeWidth={1.2} /></RailBtn>
            <RailSpacer />
            <RailRule />
            <RailBtn><BoxArrowIco /></RailBtn>
            <RailBtn><Settings size={24} strokeWidth={1.4} /></RailBtn>
          </RailInner>
        </Rail>
      </Middle>

      <Taskbar>
        <Weather>
          <WeatherCloud><CloudIco /></WeatherCloud>
          <WeatherBadge>1</WeatherBadge>
          <WeatherText>29°F<WeatherSub>Cloudy</WeatherSub></WeatherText>
        </Weather>
        <Apps>
          <Slot><StartIco /></Slot>
          <SearchPill><Search size={18} strokeWidth={1.6} />Search</SearchPill>
          {apps.map(([icon, state, badge], i) => (
            <Slot key={i} $active={state === "active"}>
              {icon}
              {(state === "run" || state === "active") && <Running $active={state === "active"} />}
              {badge === "dot" && <AppBadge $c="#ec5a5c" $dot />}
              {badge === "one" && <AppBadge $c="#b5124f">1</AppBadge>}
            </Slot>
          ))}
        </Apps>
        <Tray>
          <TrayIcon $w={30}><ChevronUp size={22} strokeWidth={1.2} /></TrayIcon>
          <TrayIcon $w={30}><CloudTray /></TrayIcon>
          <TrayIcon $w={36}><NetIco /></TrayIcon>
          <TrayIcon $w={30}><Volume2 size={22} strokeWidth={1.2} /></TrayIcon>
          <Clock><span>6:13 PM</span><span>1/19/2023</span></Clock>
          <NotifCount>22</NotifCount>
        </Tray>
      </Taskbar>
    </Shell>
  );
}
